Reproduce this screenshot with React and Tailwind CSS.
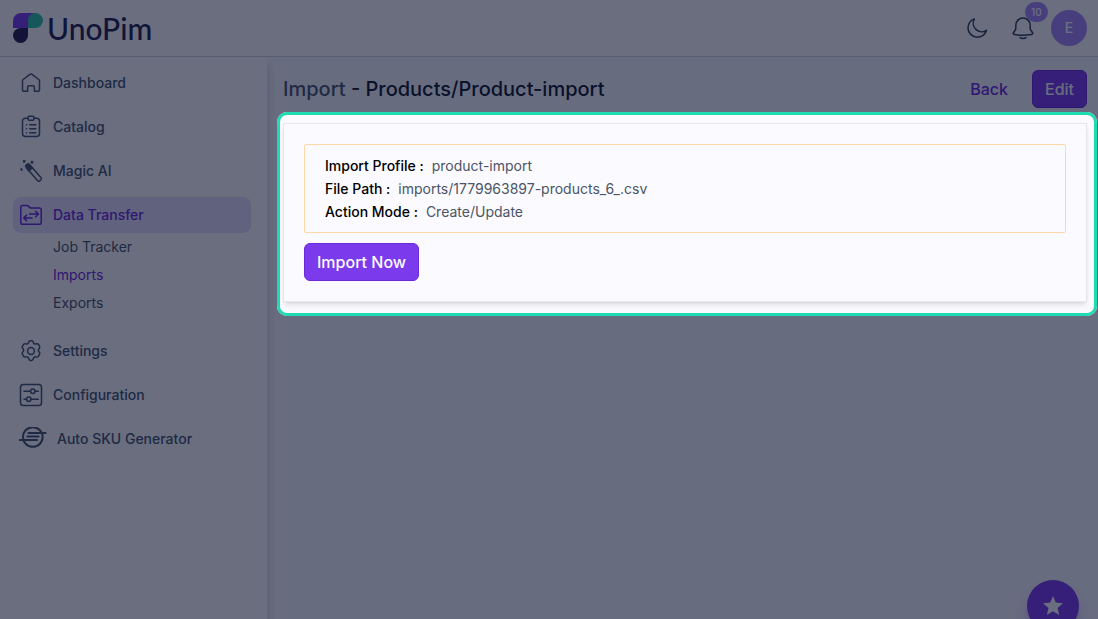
import clsx from 'clsx';

const strokeProps = {
  fill: 'none',
  stroke: 'currentColor',
  strokeWidth: 1.5,
  strokeLinecap: 'round',
  strokeLinejoin: 'round',
};

function HomeIcon() {
  return (
    <svg viewBox="0 0 24 24" className="w-6 h-6 shrink-0" {...strokeProps}>
      <path d="M3.500 9.900c0-.6.2-1 .7-1.400l6.700-5.200c.7-.5 1.500-.5 2.200 0l6.700 5.200c.5.400.7.800.7 1.400v9.100c0 .7-.5 1.200-1.200 1.200h-3.900v-4c0-.8-.6-1.400-1.400-1.400h-4c-.8 0-1.400.6-1.400 1.400v4H4.700c-.7 0-1.200-.5-1.200-1.200z" />
    </svg>
  );
}

function CatalogIcon() {
  return (
    <svg viewBox="0 0 24 24" className="w-6 h-6 shrink-0" {...strokeProps}>
      <path d="M9 3.200H6.500a3 3 0 0 0-3 3v12.400a3 3 0 0 0 3 3h11a3 3 0 0 0 3-3V6.200a3 3 0 0 0-3-3H15" />
      <rect x="9" y="1.200" width="6" height="4" rx="1.200" />
      <path d="M7.500 9.800h.1M10.800 9.800h6M7.500 13.800h.1M10.800 13.800h6M7.500 17.800h.1M10.800 17.800h6" />
    </svg>
  );
}

function MagicIcon() {
  return (
    <svg viewBox="0 0 24 24" className="w-6 h-6 shrink-0" {...strokeProps}>
      <path d="M8 9.500l3.300-3 10.800 12.300c.5.600.4 1.400-.1 1.900l-1.400 1.200c-.6.500-1.400.400-1.900-.1z" />
      <path d="M8.200 9.800L7 8.300c-.6-.7-.5-1.600.1-2.200l1-.9c.7-.6 1.600-.5 2.200.2l3 3.500-3.300 3z" fill="currentColor" />
      <path d="M4.700 1.500l1 1.500M5.900 1.700L4.500 3M13 2.300v2M12 3.300h2M1.800 10.300l1.200.6M2.600 9.800v1.400" />
    </svg>
  );
}

function TransferIcon() {
  return (
    <svg viewBox="0 0 24 24" className="w-6 h-6 shrink-0" {...strokeProps}>
      <path d="M1.800 4.400C1.800 3.400 2.600 2.600 3.600 2.600h4.400c.5 0 1 .2 1.300.5l1.600 1.500c.3.300.8.500 1.300.5h8.200c1 0 1.800.8 1.800 1.800v12.500c0 1-.8 1.800-1.800 1.800H3.600c-1 0-1.800-.8-1.800-1.800z" />
      <path d="M10.500 11h9M16.600 8.200l2.900 2.800-2.900 2.800M13 14.900H4.800M7.600 12.100l-2.800 2.800 2.800 2.800" />
    </svg>
  );
}

function SettingsIcon() {
  return (
    <svg viewBox="0 0 24 24" className="w-6 h-6 shrink-0" {...strokeProps}>
      <circle cx="12" cy="12" r="3.400" />
      <path d="M9.700 3.300c.2-.9.800-1.500 1.600-1.500h1.400c.8 0 1.400.6 1.600 1.500.3 1.300 1.600 2 2.800 1.600.9-.3 1.800-.3 2.300.5l1.200 2c.5.800.2 1.500-.5 2.200-1 .9-1 2.300 0 3.200.700.700 1 1.400.5 2.300l-1.200 2.200c-.5.800-1.400.9-2.300.6-1.200-.4-2.500.3-2.800 1.600-.2.900-.8 1.900-1.600 1.900h-1.400c-.8 0-1.400-1-1.600-1.900-.3-1.300-1.600-2-2.800-1.600-.9.300-1.800.2-2.300-.6l-1.200-2.200c-.5-.9-.2-1.600.5-2.300 1-.9 1-2.300 0-3.200-.7-.7-1-1.400-.5-2.200l1.200-2c.5-.8 1.400-.8 2.300-.5 1.200.4 2.500-.3 2.800-1.600z" />
    </svg>
  );
}

function ConfigurationIcon() {
  return (
    <svg viewBox="0 0 24 24" className="w-6 h-6 shrink-0" {...strokeProps}>
      <rect x="1.500" y="1.500" width="21" height="21" rx="2.800" />
      <circle cx="13.800" cy="8.300" r="2.200" />
      <circle cx="9.800" cy="16.300" r="2.200" />
      <path d="M5 8.300h6.500M16 8.300h3.300M5 16.300h2.600M12 16.300h7.300" />
    </svg>
  );
}

function SkuIcon() {
  return (
    <svg viewBox="0 0 28 24" className="w-7 h-6 shrink-0" {...strokeProps} strokeWidth="2">
      <circle cx="13.800" cy="10" r="9.800" />
      <path d="M.8 13H18M9.500 6h17" strokeWidth="2.200" />
      <path d="M8.500 9.500h11" strokeWidth="2.200" />
    </svg>
  );
}

function MoonIcon() {
  return (
    <svg viewBox="0 0 24 24" className="w-6 h-6" {...strokeProps}>
      <path d="M9.300 2.900A9.400 9.400 0 1 0 21.500 14.300 8.600 8.600 0 0 1 9.300 2.900z" />
    </svg>
  );
}

function BellIcon() {
  return (
    <svg viewBox="0 0 24 24" className="w-6 h-6" {...strokeProps}>
      <path d="M12 2a7.200 7.200 0 0 0-7.200 7.200v3.300c0 .5-.2 1-.5 1.500l-1.700 2.500c-.7 1 0 1.900 1.100 2.100 5.500 1 11.100 1 16.600 0 1.100-.2 1.800-1.100 1.100-2.100L19.700 14c-.3-.5-.5-1-.5-1.500V9.200A7.200 7.200 0 0 0 12 2z" />
      <path d="M9 21.600c1.700 1 4.300 1 6 0" />
    </svg>
  );
}

function Logo() {
  return (
    <a href="#dashboard" className="flex items-center gap-1">
      <svg viewBox="0 0 30 30" className="w-[30px] h-[30px]">
        <path d="M8 0h15v7.500a7.500 7.500 0 0 1-7.500 7.500H0V8a8 8 0 0 1 8-8z" fill="#7c3aed" />
        <path d="M15 15V7.500a7.500 7.500 0 0 1 7.500-7.500 7.500 7.500 0 1 1 0 15z" fill="#2dc9a4" />
        <path d="M7.500 15H15v7.500A7.500 7.500 0 1 1 7.500 15z" fill="#231f4d" />
      </svg>
      <span className="font-[Lato] text-[30px] leading-8 font-medium text-[#231f4d]">UnoPim</span>
    </a>
  );
}

const menu = [
  { name: 'Dashboard', icon: HomeIcon },
  { name: 'Catalog', icon: CatalogIcon },
  { name: 'Magic AI', icon: MagicIcon },
  {
    name: 'Data Transfer',
    icon: TransferIcon,
    active: true,
    children: [{ name: 'Job Tracker' }, { name: 'Imports', active: true }, { name: 'Exports' }],
  },
  { name: 'Settings', icon: SettingsIcon },
  { name: 'Configuration', icon: ConfigurationIcon },
  { name: 'Auto SKU Generator', icon: SkuIcon },
];

const details = [
  { label: 'Import Profile :', value: 'product-import' },
  { label: 'File Path :', value: 'imports/1779963897-products_6_.csv' },
  { label: 'Action Mode :', value: 'Create/Update' },
];

function Header() {
  return (
    <header className="flex items-center justify-between h-[57px] pl-[13px] pr-[11px] bg-white border-b border-gray-300">
      <Logo />
      <div className="flex items-center text-slate-700">
        <button aria-label="Toggle dark mode" className="mr-[22px]">
          <MoonIcon />
        </button>
        <button aria-label="Notifications" className="relative mr-4">
          <BellIcon />
          <span className="absolute -top-[14px] left-[14px] h-5 px-[6px] rounded-full bg-[#a78bfa] text-white text-[10px] leading-5 font-medium">
            10
          </span>
        </button>
        <button className="w-9 h-9 rounded-full bg-[#a78bfa] text-white text-sm font-medium">E</button>
      </div>
    </header>
  );
}

function Sidebar() {
  return (
    <aside className="w-[267px] shrink-0 pt-2 pl-[13px] pr-4 bg-white shadow-[0_8px_10px_0_rgba(0,0,0,0.2)]">
      <nav className="flex flex-col gap-2">
        {menu.map(({ name, icon: Icon, active, children }) => (
          <div key={name}>
            <a
              href="#menu"
              className={clsx(
                'flex items-center gap-[10px] h-9 px-[6px] rounded-lg text-sm font-medium',
                active ? 'bg-[#e6e1fd] text-[#6d28d9]' : 'text-slate-600'
              )}
            >
              <Icon />
              {name}
            </a>
            {children && (
              <div className="flex flex-col pb-2 pl-10">
                {children.map((child) => (
                  <a
                    key={child.name}
                    href="#submenu"
                    className={clsx('text-sm leading-7', child.active ? 'text-[#6d28d9]' : 'text-gray-600')}
                  >
                    {child.name}
                  </a>
                ))}
              </div>
            )}
          </div>
        ))}
      </nav>
    </aside>
  );
}

export default function App() {
  return (
    <div className="relative flex flex-col min-h-screen overflow-hidden bg-[#fbfaff] font-[Inter,sans-serif]">
      <Header />
      <div className="flex flex-1">
        <Sidebar />
        <main className="flex-1 min-w-0 pt-[13px] pl-4 pr-[11px]">
          <div className="flex items-center justify-between">
            <h1 className="text-xl font-medium text-slate-900">
              <span className="text-slate-600">Import</span> - Products/Product-import
            </h1>
            <div className="flex items-center gap-3 font-medium">
              <a href="#back" className="px-3 text-[#6d28d9]">Back</a>
              <button className="h-[38px] px-3 rounded-md border border-[#6d28d9] bg-[#7c3aed] text-gray-50">
                Edit
              </button>
            </div>
          </div>

          <section className="relative mt-[15px] p-5 border border-gray-200 bg-[#fbfaff] shadow-md">
            {/* Tour spotlight, its outer shadow dims the rest of the page */}
            <div className="absolute -top-3 -bottom-[15px] -left-[7px] -right-[11px] z-50 rounded-[10px] border-3 border-[#1edbb2] shadow-[0_0_0_4000px_rgba(6,14,42,0.6)] pointer-events-none" />
            <dl className="flex flex-col px-5 py-[9px] border border-orange-200 rounded-xs text-sm">
              {details.map((item) => (
                <div key={item.label} className="flex gap-2 leading-[23px]">
                  <dt className="font-medium text-black">{item.label}</dt>
                  <dd className="text-gray-600">{item.value}</dd>
                </div>
              ))}
            </dl>
            <button className="mt-[10px] h-[38px] px-3 rounded-md border border-[#6d28d9] bg-[#7c3aed] text-gray-50 font-medium">
              Import Now
            </button>
          </section>
        </main>
      </div>

      <button
        aria-label="Assistant"
        className="absolute -bottom-[13px] right-[19px] flex items-center justify-center w-[52px] h-[52px] rounded-full bg-[#7c3aed] text-white shadow-lg shadow-[#7c3aed]/40"
      >
        <svg viewBox="0 0 24 24" className="w-6 h-6" fill="currentColor">
          <path d="M12 17.300l6.200 3.700-1.600-7L22 9.200l-7.200-.6L12 2 9.200 8.600 2 9.200l5.500 4.800-1.700 7z" />
        </svg>
      </button>
    </div>
  );
}
